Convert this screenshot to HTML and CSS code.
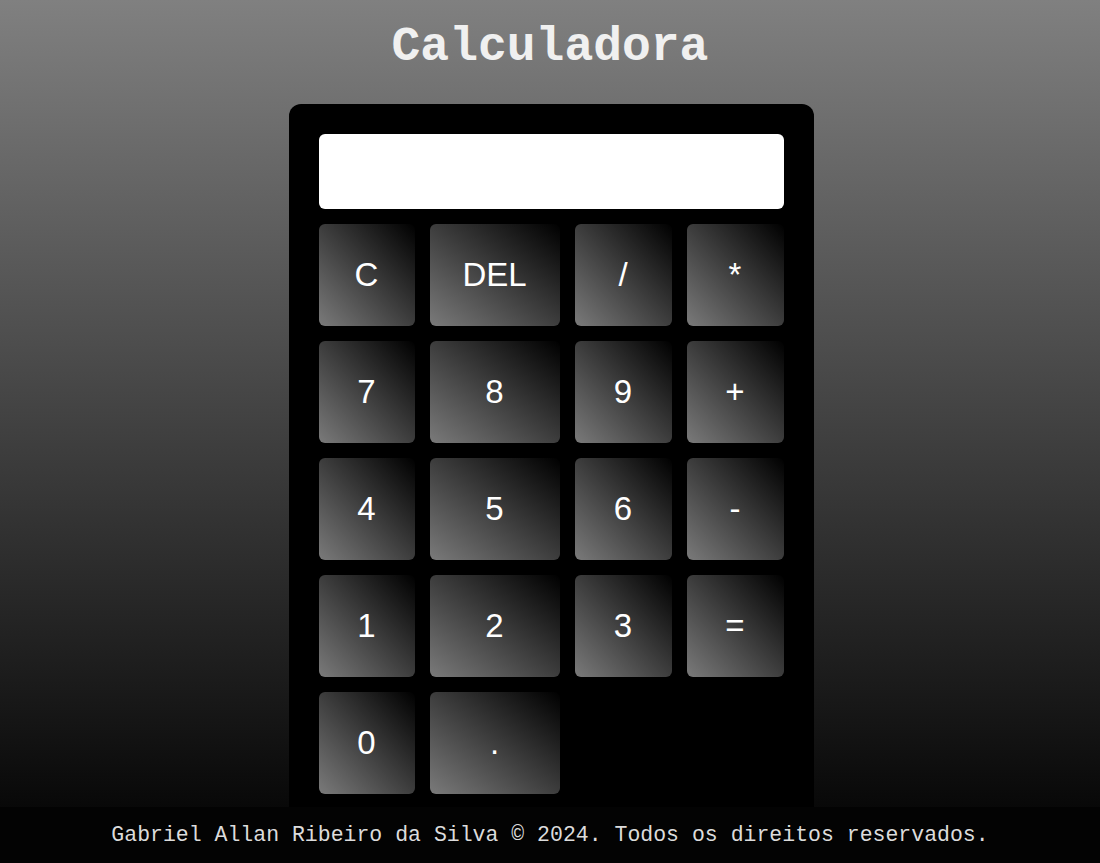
FILE: index.html
```html
<!DOCTYPE html>
<html lang="pt-BR">
<head>
<meta charset="utf-8">
<title>Calculadora</title>
<link rel="stylesheet" href="styles.css">
</head>
<body>
<h1 class="title">Calculadora</h1>
<main class="calculator">
  <div class="display"></div>
  <div class="keys">
    <button class="key">C</button>
    <button class="key">DEL</button>
    <button class="key">/</button>
    <button class="key">*</button>
    <button class="key">7</button>
    <button class="key">8</button>
    <button class="key">9</button>
    <button class="key">+</button>
    <button class="key">4</button>
    <button class="key">5</button>
    <button class="key">6</button>
    <button class="key">-</button>
    <button class="key">1</button>
    <button class="key">2</button>
    <button class="key">3</button>
    <button class="key">=</button>
    <button class="key">0</button>
    <button class="key">.</button>
  </div>
</main>
<footer class="footer">Gabriel Allan Ribeiro da Silva © 2024. Todos os direitos reservados.</footer>
</body>
</html>
```
FILE: styles.css
```css
html, body {
  margin: 0;
  height: 100%;
}
body {
  background: linear-gradient(to bottom, #808080, #000000);
  background-attachment: fixed;
  overflow: hidden;
  display: flex;
  flex-direction: column;
  align-items: center;
}
.title {
  font-family: "Liberation Mono", "Courier New", monospace;
  font-weight: bold;
  font-size: 48px;
  color: #f0f0f0;
  margin: 20px 0 30px;
  line-height: 54px;
}
.calculator {
  background: #000;
  border-radius: 12px;
  padding: 30px;
  margin-left: 2px;
  display: flex;
  flex-direction: column;
  gap: 15px;
}
.display {
  width: 465px;
  height: 75px;
  background: #fff;
  border-radius: 6px;
}
.keys {
  display: grid;
  grid-template-columns: 96px 130px 97px 97px;
  grid-auto-rows: 102px;
  gap: 15px;
}
.key {
  border: none;
  border-radius: 6px;
  background: linear-gradient(to top right, #7a7a7a, #000);
  color: #fff;
  font-family: "Liberation Sans", Arial, sans-serif;
  font-size: 33px;
  padding: 0;
}
.footer {
  position: fixed;
  left: 0;
  right: 0;
  bottom: 0;
  height: 56px;
  background: #030303;
  color: #dcdcdc;
  font-family: "Liberation Mono", "Courier New", monospace;
  font-size: 21.5px;
  display: flex;
  align-items: center;
  justify-content: center;
}
```
